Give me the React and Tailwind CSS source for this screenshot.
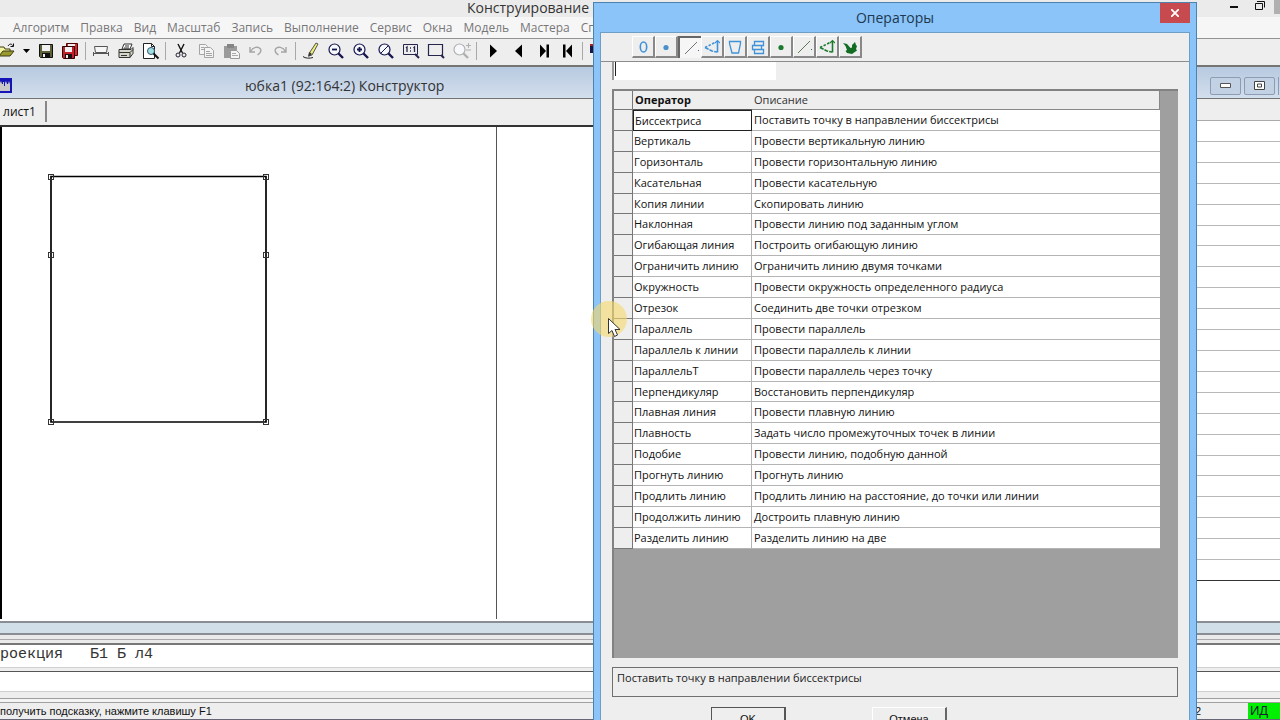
import React from "react";

const operators = [
  ["Биссектриса", "Поставить точку в направлении биссектрисы"],
  ["Вертикаль", "Провести вертикальную линию"],
  ["Горизонталь", "Провести горизонтальную линию"],
  ["Касательная", "Провести касательную"],
  ["Копия линии", "Скопировать линию"],
  ["Наклонная", "Провести линию под заданным углом"],
  ["Огибающая линия", "Построить огибающую линию"],
  ["Ограничить линию", "Ограничить линию двумя точками"],
  ["Окружность", "Провести окружность определенного радиуса"],
  ["Отрезок", "Соединить две точки отрезком"],
  ["Параллель", "Провести параллель"],
  ["Параллель к линии", "Провести параллель к линии"],
  ["ПараллельТ", "Провести параллель через точку"],
  ["Перпендикуляр", "Восстановить перпендикуляр"],
  ["Плавная линия", "Провести плавную линию"],
  ["Плавность", "Задать число промежуточных точек в линии"],
  ["Подобие", "Провести линию, подобную данной"],
  ["Прогнуть линию", "Прогнуть линию"],
  ["Продлить линию", "Продлить линию на расстояние, до точки или линии"],
  ["Продолжить линию", "Достроить плавную линию"],
  ["Разделить линию", "Разделить линию на две"],
];

const menus = ["Алгоритм", "Правка", "Вид", "Масштаб", "Запись", "Выполнение", "Сервис", "Окна", "Модель", "Мастера", "Справка"];

function Lens({ children, color = "#15154f" }) {
  return (
    <g fill="none" stroke={color}>
      <circle cx="7.5" cy="7.5" r="5.5" strokeWidth="1.2" fill="#f6f8fb" />
      <path d="M11.500 11.500L16 16" strokeWidth="2.4" />
      {children}
    </g>
  );
}

const icons = {
  open: (
    <g>
      <path d="M0 13V5h5l1 2h5v2" fill="#f3f3a0" stroke="#3a3a10" />
      <path d="M0 14l4-5h11l-4 5z" fill="#9a9a30" stroke="#3a3a10" />
      <path d="M9 4c2-3 4-2 5 0M14.500 1.500v3h-3" fill="none" stroke="#111" />
    </g>
  ),
  save: (
    <g>
      <path d="M2.500 2.500h13v13h-12l-1-1z" fill="#5d6038" stroke="#111" />
      <path d="M5 3h8v6H5z" fill="#f2f2f2" />
      <path d="M5 11h8v4H5z" fill="#111" />
      <path d="M6 12h2v3H6z" fill="#eee" />
    </g>
  ),
  saveAll: (
    <g>
      <path d="M5.500 1.500h11v12h-11z" fill="#d22a32" stroke="#500" />
      <path d="M7 2h7v2H7z" fill="#eee" />
      <path d="M1.500 4.500h12v12h-11l-1-1z" fill="#c4202b" stroke="#300" />
      <path d="M4 5h7v5H4z" fill="#f2f2f2" />
      <path d="M4 12h7v4H4z" fill="#111" />
      <path d="M5 13h2v3H5z" fill="#eee" />
    </g>
  ),
  scan: (
    <g fill="none" stroke="#555">
      <path d="M2.500 4.500h13l-1 6h-11z" fill="#f6f6f6" />
      <path d="M1 11.500h16M1.500 10v4M16.500 10v4" />
    </g>
  ),
  print: (
    <g stroke="#333">
      <path d="M5 7l2-5h8l-2 5z" fill="#fff" />
      <path d="M8 4h4M7 6h5" />
      <path d="M2 7.500h12l2-2v6l-3 4H2z" fill="#d6d6c8" />
      <path d="M2 10.500h11v5M13 10.500l3-3M4 13.500h6" fill="none" />
    </g>
  ),
  preview: (
    <g>
      <path d="M2.500 1.500h8l3 3v12h-11z" fill="#fff" stroke="#222" />
      <path d="M10.500 1.500v3h3" fill="none" stroke="#222" />
      <circle cx="10" cy="9" r="3.500" fill="#9fe0df" stroke="#357" />
      <path d="M12.500 11.500l5 5" stroke="#111" strokeWidth="2" />
    </g>
  ),
  cut: (
    <g fill="none" stroke="#111">
      <path d="M6 2l4.500 9M12 2L7.500 11" strokeWidth="1.400" />
      <circle cx="6" cy="13" r="2" stroke="#223" />
      <circle cx="12" cy="13" r="2" stroke="#223" />
    </g>
  ),
  copy: (
    <g fill="#f4f4f4" stroke="#a4a4a4">
      <path d="M2.500 2.500h6l2 2v8h-8z" />
      <path d="M7.500 5.500h6l3 3v7h-9z" />
      <path d="M4 5.500h3M4 7.500h3M9 9.500h4M9 11.500h6M9 13.500h6" />
    </g>
  ),
  paste: (
    <g>
      <path d="M2 4h13v12H2z" fill="#9b9b9b" />
      <path d="M5 2h7v4H5z" fill="#858585" />
      <path d="M8.500 8.500h6l3 3v5h-9z" fill="#f4f4f4" stroke="#999" />
      <path d="M10 11.500h4M10 13.500h6" stroke="#aaa" />
    </g>
  ),
  undo: (
    <g fill="none" stroke="#a5a5a5" strokeWidth="1.400">
      <path d="M3 5v5h5M3.500 9.500C6 5 11 4 13.500 7c1 2 0 4-3 6" />
    </g>
  ),
  redo: (
    <g fill="none" stroke="#a5a5a5" strokeWidth="1.400">
      <path d="M15 5v5h-5M14.500 9.500C12 5 7 4 4.500 7c-1 2 0 4 3 6" />
    </g>
  ),
  pen: (
    <g>
      <path d="M14 1l2 1-6 11-3 1 1-4z" fill="#eeee70" stroke="#555" />
      <path d="M7 10l-1 5 4-3" fill="#333" />
      <path d="M1 14.500c2 2 7 2 10 1" fill="none" stroke="#222" />
    </g>
  ),
  zoomOut: <Lens><path d="M5 7.500h5" strokeWidth="1.800" /></Lens>,
  zoomIn: <Lens><path d="M5 7.500h5M7.500 5v5" strokeWidth="1.800" /></Lens>,
  zoomPrev: <Lens><path d="M4 11l7-7" /></Lens>,
  zoomOne: (
    <g fill="none" stroke="#26264d">
      <path d="M1.500 2.500h14v10h-14z" />
      <path d="M4 6l1-1v5M11.500 6l1-1v5M8 6h1M8 9h1" strokeWidth="1.300" />
      <path d="M13 12l4 4" strokeWidth="2" />
    </g>
  ),
  zoomWin: (
    <g fill="none" stroke="#26264d">
      <path d="M1.500 2.500h14v11h-14z" strokeWidth="1.200" />
      <path d="M14 13l3 3" strokeWidth="2" />
    </g>
  ),
  zoomPm: (
    <Lens color="#b0b0b0">
      <path d="M14 3.500h5M16.500 1v5M14 8h5" />
    </Lens>
  ),
  next: <path d="M5 2.500l7 6.500-7 6.500z" fill="#000" />,
  prev: <path d="M12 2.500L5 9l7 6.500z" fill="#000" />,
  last: <path d="M4 2.500l6 6.500-6 6.500zM10.500 2.500h2.500v13h-2.500z" fill="#000" />,
  first: <path d="M13 2.500L7 9l6 6.500zM4 2.500h2.500v13H4z" fill="#000" />,
  flag: (
    <g>
      <path d="M0 2h8v9H0z" fill="#171747" />
      <path d="M0 2h8v2H0z" fill="#a22" />
    </g>
  ),
};

function ToolButton({ name, label, width = "w-[25px]" }) {
  return (
    <button aria-label={label} className={`flex h-[24px] shrink-0 items-center justify-center ${width}`}>
      <svg width="18" height="18" viewBox="0 0 18 18" className="overflow-visible">{icons[name]}</svg>
    </button>
  );
}

function Divider() {
  return <span className="mr-[2px] ml-px h-[18px] w-px shrink-0 bg-[#a9a9a9]" />;
}

function MainToolbar() {
  return (
    <div className="flex h-[27px] shrink-0 items-center border-t border-[#929292] bg-[#eeeeee] pb-[2px]">
      <ToolButton name="open" label="Открыть" width="w-[15px]" />
      <button aria-label="Список файлов" className="flex h-[24px] w-[19px] shrink-0 items-center justify-center pl-1">
        <svg width="7" height="4" viewBox="0 0 7 4"><path d="M0 0h7L3.500 4z" fill="#000" /></svg>
      </button>
      <ToolButton name="save" label="Сохранить" width="w-[24px]" />
      <ToolButton name="saveAll" label="Сохранить все" width="w-[24px]" />
      <span className="w-[2px] shrink-0" />
      <Divider />
      <ToolButton name="scan" label="Дигитайзер" />
      <ToolButton name="print" label="Печать" />
      <ToolButton name="preview" label="Просмотр" width="w-[24px]" />
      <span className="w-[2px] shrink-0" />
      <Divider />
      <ToolButton name="cut" label="Вырезать" />
      <ToolButton name="copy" label="Копировать" />
      <ToolButton name="paste" label="Вставить" />
      <ToolButton name="undo" label="Отменить" />
      <ToolButton name="redo" label="Повторить" width="w-[24px]" />
      <span className="w-[2px] shrink-0" />
      <Divider />
      <ToolButton name="pen" label="Рисовать" />
      <ToolButton name="zoomOut" label="Уменьшить" />
      <ToolButton name="zoomIn" label="Увеличить" />
      <ToolButton name="zoomPrev" label="Прежний масштаб" />
      <ToolButton name="zoomOne" label="Масштаб один к одному" />
      <ToolButton name="zoomWin" label="Масштаб окном" />
      <ToolButton name="zoomPm" label="Масштаб" />
      <span className="w-[2px] shrink-0" />
      <Divider />
      <span className="w-[2px] shrink-0" />
      <ToolButton name="next" label="Вперед" />
      <ToolButton name="prev" label="Назад" />
      <ToolButton name="last" label="В конец" width="w-[27px]" />
      <ToolButton name="first" label="В начало" width="w-[20px]" />
      <span className="w-[3px] shrink-0" />
      <Divider />
      <span className="w-[5px] shrink-0" />
      <ToolButton name="flag" label="Метка" width="w-[18px]" />
    </div>
  );
}

function Canvas() {
  const nodes = [[51, 50], [266, 50], [51, 128], [266, 128], [51, 295], [266, 295]];
  return (
    <svg width="497" height="492" viewBox="0 0 497 492" className="block" role="img" aria-label="Чертеж">
      <path d="M1 0v492" stroke="#000" strokeWidth="2" />
      <path d="M496.500 0v492" stroke="#555" />
      <path d="M51 49.500H266V295H51z" fill="none" stroke="#000" strokeWidth="1.700" />
      {nodes.map(([x, y]) => (
        <rect key={`${x}-${y}`} x={x - 2.5} y={y - 2.5} width="5" height="5" fill="none" stroke="#333" />
      ))}
    </svg>
  );
}

const blue = "#3f92d8";
const green = "#1c7a2c";

function Contour({ color }) {
  return (
    <g fill="none" stroke={color} strokeWidth="1.600">
      <path d="M1 8.500L11 3.500" strokeDasharray="2.500 1.500" />
      <path d="M1 8.500l4 2 3 1.500 5 1" strokeDasharray="4 1" />
      <path d="M13.500 13.500V2" />
      <path d="M11 4l2.500-2.500L16 4" strokeWidth="1.200" />
    </g>
  );
}

const pickers = [
  { label: "Все", art: <ellipse cx="8.500" cy="8" rx="3.200" ry="5" fill="none" stroke={blue} strokeWidth="1.600" /> },
  { label: "Точки", art: <circle cx="8" cy="8.500" r="2.600" fill="#4b8fca" /> },
  { label: "Линии", active: true, art: <g><path d="M2 14L14 2" stroke="#6b7680" /><path d="M15 10h1v1h-1z" fill="#567" /></g> },
  { label: "Контуры", art: <Contour color={blue} /> },
  { label: "Детали", art: <path d="M2.500 2.500h11v2l-2 9.500H5L2.500 4.500z" fill="none" stroke={blue} strokeWidth="1.300" /> },
  { label: "Структуры", art: <path d="M4.500 2.500h9v4h-9zM2.500 6.500h9v4h-9zM4.500 10.500h9v4h-9z" fill="none" stroke={blue} strokeWidth="1.300" /> },
  { label: "Точки модели", art: <circle cx="8" cy="8.500" r="2.600" fill={green} /> },
  { label: "Линии модели", art: <g><path d="M2 14L14 2" stroke="#5b7a50" /><path d="M15 10h1v1h-1z" fill={green} /></g> },
  { label: "Контуры модели", art: <Contour color={green} /> },
  { label: "Детали модели", art: <path d="M1 4l4 1 3.500 4L10 8.500 10 6l3-3 1 3 1 1-1 3 1 1.500L10 15l-5-1-1.500-2L5 11 3.500 7z" fill="#126d22" /> },
];

function OperatorsDialog() {
  return (
    <section
      role="dialog"
      aria-label="Операторы"
      className="absolute -bottom-8 right-[83px] top-[2px] flex w-[604px] flex-col border border-[#4e81ac] bg-[#8ac4f8] px-[6px] text-[#111]"
    >
      <header className="grid h-[29px] shrink-0 grid-cols-[46px_1fr_46px]">
        <h2 className="col-start-2 text-center text-[14px] leading-[29px] text-[#1d3850]">Операторы</h2>
        <button aria-label="Закрыть" className="flex h-[20px] w-[30px] items-center justify-center place-self-end self-start bg-[#c74b4e]">
          <svg width="8" height="8" viewBox="0 0 8 8"><path d="M0 0l8 8M8 0L0 8" stroke="#fff" strokeWidth="1.800" /></svg>
        </button>
      </header>
      <div className="flex min-h-0 flex-1 flex-col border border-[#6d9ec6] bg-[#eeeeee]">
        <div className="flex h-[29px] shrink-0 items-center border-b border-[#8c8c8c] pl-[31px]">
          {pickers.map((p) => (
            <button
              key={p.label}
              aria-label={p.label}
              className={
                p.active
                  ? "flex h-[22px] w-[23px] items-center justify-center border-l-2 border-t-2 border-[#666] bg-[#f6f6f6]"
                  : "flex h-[22px] w-[23px] items-center justify-center border border-b-2 border-r-2 border-b-[#888] border-l-[#fff] border-r-[#888] border-t-[#fff] bg-[#eeeeee]"
              }
            >
              <svg width="16" height="16" viewBox="0 0 16 16">{p.art}</svg>
            </button>
          ))}
        </div>
        <div className="flex min-h-0 flex-1 flex-col px-[11px]">
          <div className="flex h-[18px] w-[164px] shrink-0 items-start border-l-2 border-[#999] bg-white pl-px">
            <span className="h-[14px] w-px bg-[#222]" />
            <input aria-label="Поиск оператора" className="h-[18px] min-w-0 flex-1 bg-white text-[11px] outline-none" />
          </div>
          <div className="mt-[9px] h-[569px] shrink-0 border-l-2 border-t-2 border-[#828282] bg-[#9f9f9f]">
            <table className="h-[458px] w-[546px] table-fixed border-separate border-spacing-0 bg-white text-left text-[11px]">
              <colgroup>
                <col className="w-[19px]" />
                <col className="w-[119px]" />
                <col />
              </colgroup>
              <thead>
                <tr className="bg-[#eeeeee]">
                  <th className="border-b border-r border-[#777] p-0" />
                  <th className="border-b border-[#555] p-0 pl-[2px] font-bold leading-[18px]">Оператор</th>
                  <th className="border-b border-r border-[#888] p-0 pl-[2px] font-normal leading-[18px] text-[#333]">Описание</th>
                </tr>
              </thead>
              <tbody>
                {operators.map(([name, text], i) => (
                  <tr key={name}>
                    <td className="border-b border-r border-[#777] bg-[#eeeeee] p-0" />
                    <td
                      className={
                        i === 0
                          ? "whitespace-nowrap border border-[#222] p-0 pl-px leading-[17px]"
                          : "whitespace-nowrap border-b border-r border-[#b4b4b4] p-0 pl-px leading-[18px]"
                      }
                    >
                      {name}
                    </td>
                    <td className="whitespace-nowrap border-b border-[#b4b4b4] p-0 pl-[2px] leading-[18px]">{text}</td>
                  </tr>
                ))}
              </tbody>
            </table>
          </div>
          <div className="mt-[9px] h-[30px] shrink-0 border border-[#707070] pl-[4px] text-[11px] leading-[20px] text-[#222]">
            Поставить точку в направлении биссектрисы
          </div>
          <div className="mt-[10px] flex gap-[86px] pl-[99px] font-['Liberation_Sans',sans-serif] text-[11px] leading-[20px]">
            <button className="h-[24px] w-[75px] border border-b-2 border-r-2 border-[#555]">OK</button>
            <button className="h-[24px] w-[75px] border border-b-2 border-r-2 border-b-[#666] border-l-[#fff] border-r-[#666] border-t-[#fff]">Отмена</button>
          </div>
        </div>
      </div>
    </section>
  );
}

export default function App() {
  return (
    <div className="relative flex h-screen flex-col overflow-hidden bg-[#eeeeee] font-['Open_Sans',sans-serif] text-[#222]">
      <header className="flex h-[17px] shrink-0 items-start justify-end bg-[#ebebeb] pl-[467px]">
        <h1 className="flex-1 whitespace-nowrap text-[14px] leading-[15px] text-[#333]">Конструирование</h1>
        <button aria-label="Свернуть" className="flex h-[12px] w-[24px] items-center justify-center">
          <svg width="8" height="8" viewBox="0 0 8 8"><path d="M0 5h8" stroke="#111" strokeWidth="2" /></svg>
        </button>
        <button aria-label="Развернуть" className="flex h-[10px] w-[28px] items-center justify-center">
          <svg width="10" height="9" viewBox="0 0 10 9"><path d="M.5 2.500h7v6h-7zM2 .5h7.500v6" fill="none" stroke="#111" /></svg>
        </button>
        <button aria-label="Закрыть" className="h-[14px] w-[6px] bg-[#b0b0b0]" />
      </header>

      <nav className="flex h-[21px] shrink-0 items-center gap-[11px] bg-[#f6f6f7] pl-[13px] text-[12px] leading-[20px] text-[#777]">
        {menus.map((m) => (
          <button key={m} className="shrink-0">{m}</button>
        ))}
      </nav>

      <MainToolbar />

      <div className="flex h-[34px] shrink-0 items-center border-b border-t-2 border-[#747474] bg-linear-to-b from-[#b7cae0] to-[#d3deed] pt-[6px]">
        <svg width="12" height="15" viewBox="0 0 12 15" aria-hidden="true">
          <path d="M0 0h12v15H0z" fill="#1515b5" />
          <path d="M0 13V5l1-2 1 3h1V4h1v4h1V5l1-2 1 3h1l1-3 1 3v7z" fill="#c8c8c8" />
        </svg>
        <div className="w-[233px] shrink-0" />
        <h2 className="flex-1 whitespace-nowrap text-[14px] leading-[24px] text-[#333]">юбка1 (92:164:2) Конструктор</h2>
        <div className="flex gap-[3px]">
          <button aria-label="Свернуть документ" className="flex h-[18px] w-[31px] items-center justify-center rounded-xs border border-[#8c9cb4] bg-[#c3d1e4]">
            <svg width="11" height="5" viewBox="0 0 11 5"><path d="M.5.5h10v4H.5z" fill="#fff" stroke="#555" /></svg>
          </button>
          <button aria-label="Развернуть документ" className="flex h-[18px] w-[31px] items-center justify-center rounded-xs border border-[#8c9cb4] bg-[#c3d1e4]">
            <svg width="11" height="9" viewBox="0 0 11 9"><path d="M.5.5h10v8H.5zM3.500 3h4v3h-4z" fill="#fff" stroke="#444" /></svg>
          </button>
          <span className="h-[18px] w-[2px] border-l border-[#8c9cb4]" />
        </div>
      </div>

      <main className="flex min-h-0 flex-1">
        <div className="flex min-w-0 flex-1 flex-col">
          <div className="flex h-[28px] shrink-0 items-start border-b-2 border-[#333] pt-[2px]">
            <button className="h-[21px] w-[47px] border-r-2 border-[#888] pr-[6px] text-[12px] leading-[18px] text-[#111]">лист1</button>
          </div>
          <div className="min-h-0 flex-1 overflow-hidden bg-white">
            <Canvas />
          </div>
        </div>
        <aside className="flex w-[90px] shrink-0 flex-col bg-white">
          <div className="h-[22px] shrink-0 border-b border-[#aaa] bg-[#eeeeee]" />
          <div className="flex h-[439px] shrink-0 flex-col">
            {operators.map(([name]) => (
              <div key={name} className="flex-1 border-b border-[#b8b8b8]" />
            ))}
          </div>
          <div className="h-[21px] shrink-0 border-b border-[#333]" />
        </aside>
      </main>

      <div className="h-[14px] shrink-0 border-y-2 border-[#8a8d94] bg-[#d0dfe8]" />
      <div className="h-[10px] shrink-0 border-b-2 border-[#777] bg-[#eaeaea] pt-[4px]">
        <div className="h-px bg-[#aaa]" />
      </div>
      <div className="h-[23px] shrink-0 border-b border-[#d0d0d0] bg-white font-['Liberation_Mono',monospace] text-[15px] leading-[20px] text-[#333]">
        <pre className="font-[inherit]">роекция   Б1 Б л4</pre>
      </div>
      <div className="h-[4px] shrink-0 border-b border-[#555] bg-[#eeeeee]" />
      <div className="h-[20px] shrink-0 border-b border-[#d0d0d0] bg-white" />
      <div className="mt-[6px] h-[5px] shrink-0 border-y border-[#a0a0a0] bg-[#f4f4f4]" />
      <footer className="flex h-[17px] shrink-0 items-center border-b border-[#667] font-['Liberation_Sans',sans-serif] text-[11px] leading-[16px] text-[#111]">
        <span className="flex-1">получить подсказку, нажмите клавишу F1</span>
        <span className="w-[53px]">2</span>
        <span className="h-[16px] w-[32px] bg-[#00f000] pl-[2px] text-[13px] text-[#123]">ИД</span>
      </footer>

      <OperatorsDialog />

      <div className="pointer-events-none absolute left-[591px] top-[301px] size-[36px] rounded-full bg-[#f5d96a]/60">
        <svg width="14" height="20" viewBox="0 0 14 20" className="ml-[17px] mt-[17px]" aria-hidden="true">
          <path d="M.5.500v15l3.500-3 2.500 6 3-1.500-2.500-5.500h5z" fill="#fff" stroke="#333" />
        </svg>
      </div>
    </div>
  );
}
